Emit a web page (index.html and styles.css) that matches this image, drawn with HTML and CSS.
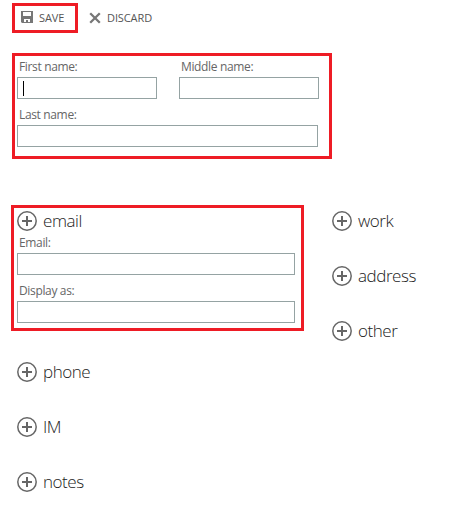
FILE: index.html
```
<!DOCTYPE html>
<html lang="en">
<head>
  <meta charset="UTF-8">
  <meta name="viewport" content="width=device-width, initial-scale=1.0">
  <title>New contact</title>
  <link rel="stylesheet" href="styles.css">
</head>
<body>
  <svg class="symbols" width="0" height="0">
    <symbol id="plus" viewBox="0 0 20 20">
      <circle cx="10" cy="10" r="9.2" fill="none" stroke="#666" stroke-width="1.5"/>
      <path d="M5 10h10M10 5v10" stroke="#666" stroke-width="2"/>
    </symbol>
  </svg>

  <div class="toolbar">
    <button class="action highlight">
      <svg class="icon-save" width="12" height="12" viewBox="0 0 12 12">
        <path fill="#777" fill-rule="evenodd" d="M0 0h12v12H1l-1-1zM2 1v4h8V1zM3 8v3h2V9h2v2h2V8z"/>
      </svg>
      <span class="save-text">SAVE</span>
    </button>
    <button class="action discard">
      <svg width="12" height="12" viewBox="0 0 12 12">
        <path d="M1.2 1.2l9.6 9.6M10.8 1.2l-9.6 9.6" stroke="#777" stroke-width="2.3"/>
      </svg>
      <span class="discard-text">DISCARD</span>
    </button>
  </div>

  <div class="names highlight">
    <div class="field first">
      <label>First name:</label>
      <div class="input"><span class="caret"></span></div>
    </div>
    <div class="field">
      <label>Middle name:</label>
      <div class="input"></div>
    </div>
    <div class="field last">
      <label>Last name:</label>
      <div class="input"></div>
    </div>
  </div>

  <div class="sections">
    <div class="main">
      <div class="email highlight">
        <h2 class="add"><svg><use href="#plus"/></svg><span>email</span></h2>
        <div class="field">
          <label>Email:</label>
          <div class="input"></div>
        </div>
        <div class="field">
          <label>Display as:</label>
          <div class="input"></div>
        </div>
      </div>
      <div class="list">
        <h2 class="add"><svg><use href="#plus"/></svg><span>phone</span></h2>
        <h2 class="add"><svg><use href="#plus"/></svg><span>IM</span></h2>
        <h2 class="add"><svg><use href="#plus"/></svg><span>notes</span></h2>
      </div>
    </div>
    <div class="list side">
      <h2 class="add"><svg><use href="#plus"/></svg><span>work</span></h2>
      <h2 class="add"><svg><use href="#plus"/></svg><span>address</span></h2>
      <h2 class="add"><svg><use href="#plus"/></svg><span>other</span></h2>
    </div>
  </div>
</body>
</html>
```
FILE: styles.css
```
* {
  box-sizing: border-box;
}

body {
  margin: 0;
  padding: 3px 0 0 11px;
  height: 518px;
  overflow: hidden;
  background: #fff;
  color: #666;
  font: 12px/16px "Open Sans", "Noto Sans", sans-serif;
}

svg {
  display: block;
  flex: none;
}

.symbols {
  position: absolute;
}

.highlight {
  border: 3px solid #ee1c25;
}

.toolbar {
  display: flex;
  height: 30px;
  padding-left: 1px;
}

.action {
  display: flex;
  align-items: center;
  gap: 6px;
  margin: 0;
  padding: 0;
  background: none;
  color: #555;
  font: 11px/16px "Open Sans", "Noto Sans", sans-serif;
}

.action.highlight {
  width: 66px;
  padding-left: 6px;
}

.icon-save {
  margin-top: -2px;
}

.save-text {
  letter-spacing: -0.1px;
}

.discard {
  border: 0;
  padding-left: 11px;
}

.discard-text {
  letter-spacing: -0.1px;
}

.names {
  display: grid;
  grid-template-columns: 140px 140px;
  column-gap: 22px;
  row-gap: 10px;
  align-content: start;
  width: 320px;
  height: 106px;
  margin: 20px 0 0 1px;
  padding: 3px 0 0 2px;
}

.last {
  grid-column: 1 / 3;
  width: 301px;
}

.field label {
  display: block;
  height: 16px;
  margin-bottom: 2px;
  padding-left: 2px;
  letter-spacing: -0.35px;
}

.names .field {
  height: 40px;
}

.names .last {
  margin-top: -2px;
}

.input {
  height: 22px;
  padding: 3px 5px;
  border: 1px solid #95a3a3;
  background: #fff;
}

.caret {
  display: block;
  width: 1px;
  height: 15px;
  background: #000;
}

.sections {
  display: flex;
  margin-top: 46px;
}

.main {
  width: 293px;
}

.email {
  height: 126px;
  padding: 3px 6px 0 3px;
}

.email .field {
  margin-top: 4px;
}

.email .field + .field {
  margin-top: 8px;
}

.add {
  display: flex;
  align-items: center;
  gap: 6px;
  height: 20px;
  margin: 0;
  color: #222;
  font-size: 17px;
  font-weight: 300;
  line-height: 20px;
  letter-spacing: -0.45px;
}

.add svg {
  width: 20px;
  height: 20px;
}

.list {
  display: flex;
  flex-direction: column;
  gap: 35px;
  padding: 31px 0 0 6px;
}

.side {
  padding: 6px 0 0 28px;
}
```
